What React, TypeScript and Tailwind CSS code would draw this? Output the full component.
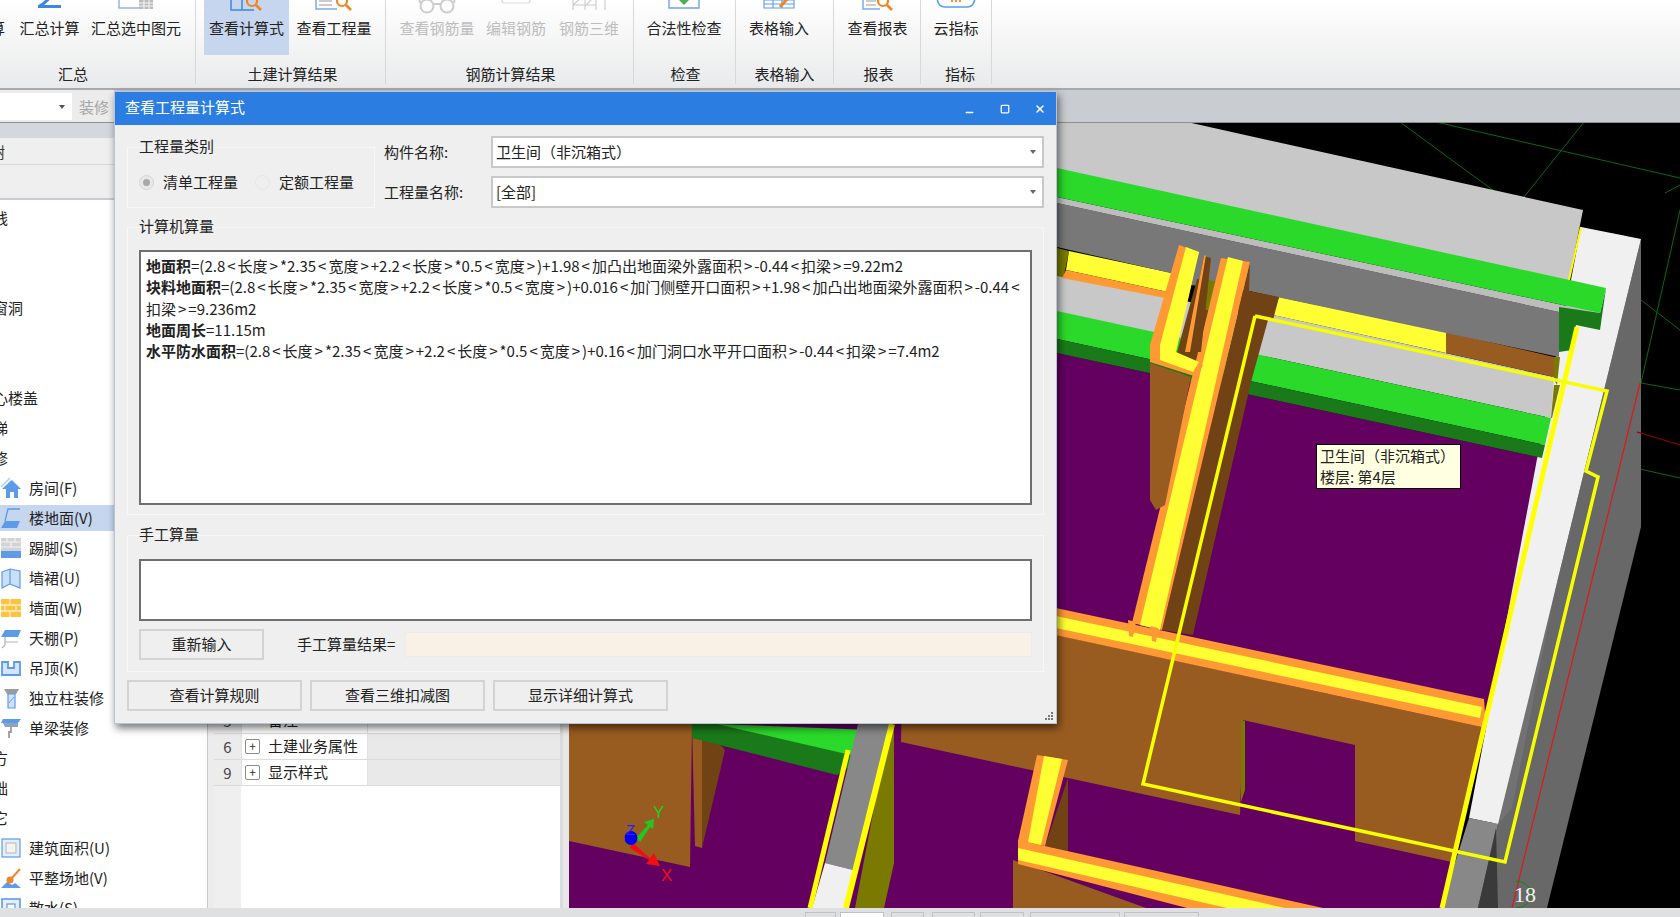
import { ReactNode } from "react";
import { Minus, Square, X } from "lucide-react";

const BLUE = "#5b9bea";

// icons are cut by the top of the window, so most of these only show the lower part
const ribbonIcons: Record<string, ReactNode> = {
  sum: (
    <svg width="24" height="8" viewBox="0 0 24 8">
      <path d="M16 -6 L5 4 L1 6.5 H23" fill="none" stroke="#3f87de" strokeWidth="3" />
    </svg>
  ),
  selected: (
    <svg width="36" height="10" viewBox="0 0 36 10">
      <path d="M1 -3 V8 H24" fill="none" stroke="#8db5ea" strokeWidth="1.5" />
      <rect x="21" y="0" width="14" height="9" fill="#bbb" />
      <path d="M21 3 H35 M21 6 H35 M26 0 V9 M31 0 V9" stroke="#f4f4f4" strokeWidth="1" />
    </svg>
  ),
  calc: (
    <svg width="34" height="12" viewBox="0 0 34 12">
      <path d="M1 -3 V10 H12 V-3 M12 10 H24" fill="none" stroke="#3f87de" strokeWidth="1.5" />
      <circle cx="22" cy="1" r="5" fill="none" stroke="#ef8626" strokeWidth="2.2" />
      <path d="M26 5 L31 10" stroke="#ef8626" strokeWidth="2.6" />
    </svg>
  ),
  quantity: (
    <svg width="38" height="12" viewBox="0 0 38 12">
      <path d="M1 -3 V9 H22" fill="none" stroke="#7caae6" strokeWidth="1.5" />
      <path d="M4 1 H17 M4 5 H17" stroke="#999" strokeWidth="1.2" />
      <circle cx="27" cy="1" r="5" fill="none" stroke="#ef8626" strokeWidth="2.2" />
      <path d="M31 5 L36 10" stroke="#ef8626" strokeWidth="2.6" />
    </svg>
  ),
  glasses: (
    <svg width="38" height="14" viewBox="0 0 38 14">
      <circle cx="9" cy="6" r="6.5" fill="none" stroke="#ccc" strokeWidth="2" />
      <circle cx="29" cy="6" r="6.5" fill="none" stroke="#ccc" strokeWidth="2" />
      <path d="M15 4 H23 M2 3 L1 -3 M36 3 L37 -3" stroke="#ccc" strokeWidth="2" fill="none" />
    </svg>
  ),
  edit: (
    <svg width="30" height="4" viewBox="0 0 30 4">
      <path d="M1 -3 V1 Q1 3 3 3 H27 Q29 3 29 1 V-3" fill="none" stroke="#ddd" strokeWidth="1.2" />
    </svg>
  ),
  rebar3d: (
    <svg width="34" height="11" viewBox="0 0 34 11">
      <path d="M1 0 V10 M13 -3 V10 M24 -3 V10 M33 0 V10 M1 5 H24 M1 5 L10 -3 M13 6 L22 -3" fill="none" stroke="#ccc" strokeWidth="1.1" />
    </svg>
  ),
  check: (
    <svg width="32" height="9" viewBox="0 0 32 9">
      <path d="M1 -3 V8 H31 V-3" fill="none" stroke="#6fa3e6" strokeWidth="1.4" />
      <path d="M10 -1 H22 L16 5 Z" fill="#4caf50" />
    </svg>
  ),
  table: (
    <svg width="32" height="9" viewBox="0 0 32 9">
      <path d="M1 0 H31 V8 H1 Z M1 4 H31 M10 0 V8 M19 0 V8" fill="none" stroke="#5b9bea" strokeWidth="1.1" />
      <path d="M17 7 L26 -3" stroke="#ef8626" strokeWidth="3" />
    </svg>
  ),
  report: (
    <svg width="32" height="11" viewBox="0 0 32 11">
      <path d="M1 -3 V9 H18" fill="none" stroke="#7caae6" strokeWidth="1.5" />
      <path d="M4 1 H14 M4 5 H14" stroke="#999" strokeWidth="1.2" />
      <circle cx="21" cy="1" r="5" fill="none" stroke="#ef8626" strokeWidth="2.2" />
      <path d="M25 5 L30 10" stroke="#ef8626" strokeWidth="2.6" />
    </svg>
  ),
  cloud: (
    <svg width="40" height="8" viewBox="0 0 40 8">
      <path d="M1 -4 Q1 7 9 7 H31 Q39 7 39 -4" fill="none" stroke="#5b9bea" strokeWidth="1.6" />
      <path d="M16 2 V-2 M20 2 V-2 M24 2 V-2" stroke="#ef8626" strokeWidth="1.8" />
    </svg>
  ),
};

function RibbonButton({
  label,
  width,
  icon,
  disabled,
  active,
}: {
  label: string;
  width: string;
  icon?: string;
  disabled?: boolean;
  active?: boolean;
}) {
  return (
    <div className={`${width} h-[58px] flex flex-col items-center shrink-0 ${active ? "bg-[#c5d6ee]" : ""}`}>
      <div className="h-[18px] flex items-start justify-center">{icon && ribbonIcons[icon]}</div>
      <div className={`h-[20px] leading-[20px] whitespace-nowrap ${disabled ? "text-[#bdbdbd]" : "text-[#222]"}`}>
        {label}
      </div>
    </div>
  );
}

function RibbonGroup({
  width,
  title,
  titleClass,
  children,
}: {
  width: string;
  title: string;
  titleClass?: string;
  children: ReactNode;
}) {
  return (
    <div className={`${width} shrink-0 h-[84px] border-r border-[#d8d8d8] flex flex-col`}>
      <div className="h-[58px] flex overflow-hidden">{children}</div>
      <div className={`mt-[9px] leading-[20px] text-center text-[#222] ${titleClass ?? ""}`}>{title}</div>
    </div>
  );
}

function Ribbon() {
  return (
    <div className="h-[90px] shrink-0 border-b-[2px] border-[#a8aaac] bg-gradient-to-b from-white to-[#e9eaeb] flex">
      <RibbonGroup width="w-[196px]" title="汇总" titleClass="pr-[49px]">
        <div className="w-[14px] h-[58px] shrink-0 overflow-hidden">
          <div className="h-[18px]" />
          <div className="-ml-[25px] leading-[20px] text-[#222] whitespace-nowrap">计算</div>
        </div>
        <RibbonButton label="汇总计算" width="w-[71px]" icon="sum" />
        <RibbonButton label="汇总选中图元" width="w-[102px]" icon="selected" />
      </RibbonGroup>
      <RibbonGroup width="w-[190px]" title="土建计算结果" titleClass="pl-[4px]">
        <div className="w-[8px] shrink-0" />
        <RibbonButton label="查看计算式" width="w-[85px]" icon="calc" active />
        <RibbonButton label="查看工程量" width="w-[90px]" icon="quantity" />
      </RibbonGroup>
      <RibbonGroup width="w-[248px]" title="钢筋计算结果" titleClass="pl-[2px]">
        <div className="w-[6px] shrink-0" />
        <RibbonButton label="查看钢筋量" width="w-[90px]" icon="glasses" disabled />
        <RibbonButton label="编辑钢筋" width="w-[68px]" icon="edit" disabled />
        <RibbonButton label="钢筋三维" width="w-[78px]" icon="rebar3d" disabled />
      </RibbonGroup>
      <RibbonGroup width="w-[102px]" title="检查" titleClass="pl-[2px]">
        <RibbonButton label="合法性检查" width="w-[100px]" icon="check" />
      </RibbonGroup>
      <RibbonGroup width="w-[98px]" title="表格输入">
        <RibbonButton label="表格输入" width="w-[86px]" icon="table" />
      </RibbonGroup>
      <RibbonGroup width="w-[87px]" title="报表" titleClass="pl-[3px]">
        <RibbonButton label="查看报表" width="w-[87px]" icon="report" />
      </RibbonGroup>
      <RibbonGroup width="w-[71px]" title="指标" titleClass="pl-[8px]">
        <RibbonButton label="云指标" width="w-[70px]" icon="cloud" />
      </RibbonGroup>
    </div>
  );
}

function Toolbar() {
  return (
    <div className="h-[33px] shrink-0 bg-[#c9cdd2] border-b border-[#8d8f92] flex">
      <div className="w-[114px] bg-[#ececec] flex pt-[3px]">
        <div className="w-[72px] h-[27px] bg-white relative">
          <span className="absolute right-[7px] top-[12px] border-x-[3px] border-t-[4px] border-x-transparent border-t-[#555]" />
        </div>
        <div className="ml-[7px] leading-[27px] text-[#a5a5a5]">装修</div>
      </div>
    </div>
  );
}

const sideIcons: Record<string, ReactNode> = {
  room: (
    <svg width="22" height="22" viewBox="0 0 22 22">
      <path d="M1 10 L10 1 M4 11 L11 4" stroke="#a9cdf5" strokeWidth="1.4" fill="none" />
      <path d="M2 12 L12 3 L21 12 H18 V21 H14 V15 H10 V21 H6 V12 Z" fill={BLUE} />
    </svg>
  ),
  floor: (
    <svg width="22" height="22" viewBox="0 0 22 22">
      <path d="M20 2 H8 L5 14" fill="none" stroke={BLUE} strokeWidth="1.3" />
      <path d="M5 14 H20 L17 21 H1 Z" fill={BLUE} />
    </svg>
  ),
  skirt: (
    <svg width="22" height="22" viewBox="0 0 22 22">
      <rect x="1" y="1" width="20" height="13" fill="#d3d3d3" />
      <path d="M1 5 H21 M1 10 H21 M7 1 V5 M15 1 V5 M11 5 V10" stroke="#f3f3f3" strokeWidth="1.2" />
      <rect x="1" y="14" width="20" height="7" fill={BLUE} />
    </svg>
  ),
  dado: (
    <svg width="22" height="22" viewBox="0 0 22 22">
      <path d="M2 5 L10 2 V17 L2 21 Z M10 2 L20 4 V21 L10 17" fill="#c9def7" stroke={BLUE} strokeWidth="1.2" />
    </svg>
  ),
  wall: (
    <svg width="22" height="22" viewBox="0 0 22 22">
      <rect x="1" y="2" width="20" height="18" fill="#ffc33d" />
      <path d="M1 8 H21 M1 14 H21 M10 2 V8 M5 8 V14 M16 8 V14 M10 14 V20" stroke="#fff1c4" strokeWidth="1.3" />
    </svg>
  ),
  ceiling: (
    <svg width="22" height="22" viewBox="0 0 22 22">
      <path d="M5 3 H21 L18 10 H1 Z" fill={BLUE} />
      <path d="M5 10 V18 L2 21 M5 15 H18" stroke="#b3b3b3" strokeWidth="1.2" fill="none" />
    </svg>
  ),
  hang: (
    <svg width="22" height="22" viewBox="0 0 22 22">
      <path d="M2 5 H8 V11 H14 V5 H20 V18 H2 Z" fill="#d5e6fa" stroke={BLUE} strokeWidth="1.8" />
    </svg>
  ),
  column: (
    <svg width="22" height="22" viewBox="0 0 22 22">
      <path d="M4 2 H19 L16 7 H7 Z" fill="#9c9c9c" />
      <path d="M8 7 H15 V21 H8 Z" fill="#cfe2f8" stroke={BLUE} strokeWidth="1.2" />
      <path d="M9 16 L14 10" stroke={BLUE} strokeWidth="1" />
    </svg>
  ),
  beam: (
    <svg width="22" height="22" viewBox="0 0 22 22">
      <path d="M3 2 H21 L18 6 H1 Z" fill={BLUE} />
      <path d="M3 6 H18 V10 H5 Z" fill="#8fa3bb" />
      <path d="M11 10 V15 H9 V21" stroke="#9c9c9c" strokeWidth="1.8" fill="none" />
    </svg>
  ),
  area: (
    <svg width="22" height="22" viewBox="0 0 22 22">
      <rect x="2" y="2" width="18" height="18" fill="#e6eefa" stroke={BLUE} strokeWidth="1.2" />
      <rect x="6" y="6" width="10" height="10" fill="#f3f3f3" stroke="#b5b5b5" strokeWidth="1" />
    </svg>
  ),
  level: (
    <svg width="22" height="22" viewBox="0 0 22 22">
      <path d="M1 21 L7 15 L12 18 L15 16 L21 21 Z" fill={BLUE} />
      <path d="M11 12 L20 2" stroke="#ef8626" strokeWidth="2" />
      <circle cx="10" cy="13" r="3.5" fill="#ef8626" />
    </svg>
  ),
  apron: (
    <svg width="22" height="22" viewBox="0 0 22 22">
      <rect x="2" y="2" width="18" height="18" fill="#e6eefa" stroke={BLUE} strokeWidth="1.6" />
      <rect x="7" y="7" width="8" height="8" fill="#fff" stroke={BLUE} strokeWidth="1.2" />
    </svg>
  ),
};

const treeRows: { label?: string; icon?: string; active?: boolean }[] = [
  { label: "轴线" },
  {},
  {},
  { label: "门窗洞" },
  {},
  {},
  { label: "空心楼盖" },
  { label: "楼梯" },
  { label: "装修" },
  { label: "房间(F)", icon: "room" },
  { label: "楼地面(V)", icon: "floor", active: true },
  { label: "踢脚(S)", icon: "skirt" },
  { label: "墙裙(U)", icon: "dado" },
  { label: "墙面(W)", icon: "wall" },
  { label: "天棚(P)", icon: "ceiling" },
  { label: "吊顶(K)", icon: "hang" },
  { label: "独立柱装修", icon: "column" },
  { label: "单梁装修", icon: "beam" },
  { label: "土方" },
  { label: "基础" },
  { label: "其它" },
  { label: "建筑面积(U)", icon: "area" },
  { label: "平整场地(V)", icon: "level" },
  { label: "散水(S)", icon: "apron" },
];

function Sidebar() {
  return (
    <div className="w-[208px] shrink-0 border-r border-[#c6c9cd] bg-white overflow-hidden">
      <div className="h-[15px] bg-[#d4d7dc]" />
      <div className="h-[27px] bg-[#efefef] border-b border-[#d8d8d8] overflow-hidden leading-[27px] whitespace-nowrap">
        <span className="-ml-[10px] text-[#333]">树</span>
      </div>
      <div className="h-[35px] bg-[#efefef] border-b-[2px] border-[#c9ccd3]" />
      <div className="pt-[1px]">
        {treeRows.map((row, i) => (
          <div
            key={i}
            className={`h-[26px] mt-[4px] flex items-center overflow-hidden whitespace-nowrap text-[#222] ${row.active ? "bg-[#c5d6ee]" : ""}`}
          >
            {row.icon ? (
              <>
                <span className="w-[29px] shrink-0">{sideIcons[row.icon]}</span>
                <span>{row.label}</span>
              </>
            ) : (
              row.label && <span className="-ml-[22px]">{row.label}</span>
            )}
          </div>
        ))}
      </div>
    </div>
  );
}

function PropRow({ no, name, plus, shaded }: { no: number; name: string; plus?: boolean; shaded?: boolean }) {
  return (
    <div className="h-[26px] flex border-b border-[#dcdcdc]">
      <div className="w-[27px] shrink-0 bg-[#ececec] text-center leading-[26px] text-[#444]">{no}</div>
      <div className="w-[127px] shrink-0 bg-white flex items-center border-x border-[#e2e2e2]">
        {plus ? (
          <span className="ml-[3px] w-[15px] h-[15px] border border-[#8c8c8c] rounded-[2px] text-[12px] leading-[12px] text-center text-[#333]">
            +
          </span>
        ) : (
          <span className="ml-[3px] w-[15px]" />
        )}
        <span className="ml-[8px] whitespace-nowrap text-[#222]">{name}</span>
      </div>
      <div className={`flex-1 ${shaded ? "bg-[#e9e9e9]" : "bg-white"}`} />
    </div>
  );
}

function PropertyPanel() {
  return (
    <div className="w-[355px] shrink-0 bg-[#ececec] pl-[6px]">
      <div className="h-full w-[349px] bg-white border-r-[3px] border-[#d9dbde] flex flex-col">
        <div className="h-[585px] shrink-0 flex">
          <div className="w-[27px] bg-[#ececec]" />
        </div>
        <PropRow no={5} name="备注" />
        <PropRow no={6} name="土建业务属性" plus shaded />
        <PropRow no={9} name="显示样式" plus shaded />
        <div className="flex-1 flex">
          <div className="w-[27px] bg-[#efefef]" />
        </div>
      </div>
    </div>
  );
}

const C = {
  purple: "#640060",
  brown: "#995c20",
  darkBrown: "#704214",
  orange: "#ff9933",
  yellow: "#ffff33",
  green: "#2bd92b",
  darkGreen: "#1a7a1a",
  light: "#c8c8c8",
  mid: "#787878",
  white: "#f0f0f0",
  side: "#686868",
  olive: "#7a7a00",
};

// scene polygons in page coordinates, back to front
const polys: [string, string][] = [
  [C.purple, "569,300 1057,353 1542,458 1442,908 569,908"],
  [C.light, "1057,122 1187,122 1583,210 1567,290 1057,175"],
  [C.side, "1641,239 1641,527 1547,908 1478,908 1498,824"],
  ["#727272", "1610,233 1625,236 1512,808 1498,824 1486,860"],
  [C.white, "1581,227 1641,239 1498,824 1469,818"],
  ["#888888", "1469,818 1498,824 1478,908 1441,908"],
  ["#3a3a3a", "1496,828 1498,908 1478,908"],
  [C.olive, "1057,248 1069,251 1057,310"],
  [C.light, "1057,276 1165,297 1279,320 1265,360 1057,312"],
  [C.light, "1273,315 1554,377 1551,418 1259,355"],
  [C.yellow, "1279,297 1446,332 1446,353 1273,315"],
  [C.brown, "1446,332 1554,357 1554,377 1446,353"],
  [C.olive, "1554,357 1560,357 1557,385 1554,380"],
  [C.olive, "1554,385 1560,385 1552,418 1551,418"],
  [C.green, "1057,311 1551,418 1545,445 1057,339"],
  [C.darkGreen, "1057,339 1545,445 1542,458 1057,353"],
  [C.yellow, "1069,251 1172,273 1168,292 1066,270"],
  [C.orange, "1066,270 1168,292 1165,298 1062,278"],
  [C.mid, "1057,203 1559,312 1559,357 1249,291 1057,247"],
  ["#bdbdbd", "1057,197 1600,313 1559,312 1057,203"],
  [C.darkGreen, "1559,307 1600,313 1606,288 1600,330 1576,325 1572,350 1559,352"],
  [C.green, "1057,168 1606,288 1600,313 1057,197"],
  // walls running back from the horizontal one
  [C.mid, "1190,250 1250,262 1249,291 1190,285"],
  [C.darkBrown, "1197,279 1226,283 1203,365 1175,360"],
  [C.olive, "1208,280 1224,283 1218,310 1203,310"],
  [C.darkBrown, "1250,262 1249,291 1279,297 1273,320 1268,320 1251,382 1193,635 1162,630"],
  [C.orange, "1221,258 1250,262 1162,630 1132,623"],
  [C.yellow, "1228,257 1243,261 1160,630 1140,625"],
  [C.brown, "1150,363 1191,377 1165,505 1156,510 1150,500"],
  [C.darkBrown, "1204,256 1211,258 1201,352 1185,352"],
  [C.orange, "1204,256 1206,255 1190,352 1185,352"],
  [C.orange, "1179,245 1199,252 1175,353 1203,365 1197,377 1150,362 1150,345"],
  [C.yellow, "1186,247 1199,252 1176,352 1199,362 1193,372 1160,360 1160,345"],
  // near wall with door opening
  [C.brown, "904,600 1057,635 1486,728 1452,862 1355,841 1355,745 1243,720 1240,815 1068,778 901,742"],
  [C.olive, "1241,720 1245,721 1245,790 1241,802"],
  [C.brown, "569,724 692,724 690,867 569,841"],
  [C.brown, "692,724 702,724 702,848 695,846"],
  [C.darkBrown, "702,724 725,750 702,848"],
  [C.orange, "1000,596 1484,699 1486,728 1000,623"],
  [C.yellow, "1000,604 1482,707 1480,718 1000,616"],
  [C.orange, "1128,620 1136,622 1133,637 1129,636"],
  [C.orange, "1151,626 1158,628 1156,642 1152,641"],
  // lower left stub
  [C.darkGreen, "692,724 716,724 863,757 837,775 692,738"],
  [C.green, "716,724 871,730 863,757 842,753"],
  [C.olive, "894,727 894,863 884,908 855,908 890,724"],
  ["#888888", "858,724 891,724 853,870 825,863"],
  [C.white, "825,863 853,870 845,908 812,908"],
  // bottom wall
  [C.brown, "1013,860 1146,908 1013,908"],
  [C.darkBrown, "1068,778 1068,851 1045,846"],
  [C.orange, "1018,840 1323,908 1187,908 1018,864"],
  [C.yellow, "1018,848 1285,908 1227,908 1018,860"],
  [C.orange, "1037,755 1068,760 1045,846 1018,841"],
  [C.yellow, "1044,756 1062,759 1041,845 1028,842"],
];

const gridLines: [number, number, number, number][] = [
  [1400, 122, 1494, 191],
  [1436, 122, 1680, 178],
  [1584, 122, 1524, 197],
  [1665, 193, 1680, 185],
  [1680, 210, 1641, 383],
  [1641, 300, 1680, 330],
  [1641, 383, 1680, 390],
  [1622, 465, 1680, 478],
];

function Scene() {
  return (
    <div className="flex-1 relative bg-black overflow-hidden">
      <svg className="absolute inset-0" width="1111" height="785" viewBox="569 123 1111 785">
        {gridLines.map(([x1, y1, x2, y2], i) => (
          <line key={i} x1={x1} y1={y1} x2={x2} y2={y2} stroke="#0a6a0a" strokeWidth="1" />
        ))}
        {polys.map(([fill, points], i) => (
          <polygon key={i} fill={fill} points={points} />
        ))}
        <line x1="1581" y1="227" x2="1569" y2="280" stroke="#ffff00" strokeWidth="2" />
        <line x1="1577" y1="327" x2="1442" y2="908" stroke="#ffff00" strokeWidth="5" />
        <line x1="848" y1="750" x2="810" y2="908" stroke="#ffff00" strokeWidth="5" />
        <line x1="892" y1="724" x2="846" y2="908" stroke="#ffff00" strokeWidth="6" />
        <line x1="1640" y1="383" x2="1512" y2="908" stroke="#e01818" strokeWidth="1.2" />
        <line x1="1637" y1="432" x2="1680" y2="445" stroke="#8a0000" strokeWidth="1.2" />
        <polyline
          points="1255,316 1607,391 1586,471 1598,477 1505,862 1143,784 1255,316"
          fill="none"
          stroke="#f6ff00"
          strokeWidth="3.5"
        />
        <path d="M1516 881 A16 16 0 0 1 1532 894 A16 16 0 0 1 1516 908" fill="none" stroke="#0a8a0a" strokeWidth="1" />
        <text x="1514" y="902" fill="#f2f2f2" fontSize="22" fontFamily="Liberation Serif, serif">
          18
        </text>
        {/* axis triad */}
        <path d="M631 845 L624 838 L638 838 Z" fill="#dddddd" />
        <path d="M636 838 L648 825 L644 822 L654 819 L653 829 L650 827 L640 842 Z" fill="#22c722" />
        <path d="M632 842 L650 858 L654 853 L660 866 L646 864 L649 860 L630 848 Z" fill="#ee1111" />
        <ellipse cx="631" cy="838" rx="6.5" ry="7" fill="#0000ee" />
        <text x="626" y="835" fill="#2222ee" fontSize="15" fontFamily="Liberation Sans, sans-serif">
          Z
        </text>
        <text x="653" y="818" fill="#22cc22" fontSize="17" fontFamily="Liberation Sans, sans-serif">
          Y
        </text>
        <text x="661" y="881" fill="#ee1111" fontSize="17" fontFamily="Liberation Sans, sans-serif">
          X
        </text>
      </svg>
      <div className="absolute left-[747px] top-[321px] w-[145px] h-[45px] bg-[#ffffe1] border border-black px-[3px] text-[15px] leading-[21px] text-[#222] whitespace-nowrap">
        <div>卫生间（非沉箱式）</div>
        <div>楼层: 第4层</div>
      </div>
    </div>
  );
}

function Group({ title, className, children }: { title: string; className: string; children: ReactNode }) {
  return (
    <div className={`border border-[#f7f7f7] px-[11px] ${className}`}>
      <div className="-mt-[13px] h-[21px] leading-[21px] text-[#222]">{title}</div>
      {children}
    </div>
  );
}

function SelectBox({ value }: { value: string }) {
  return (
    <div className="w-[553px] h-[32px] bg-white border-[2px] border-[#c8c8c8] flex items-center justify-between pl-[3px] pr-[6px] text-[#222]">
      <span>{value}</span>
      <span className="border-x-[3px] border-t-[4px] border-x-transparent border-t-[#666]" />
    </div>
  );
}

function Btn({ label, className }: { label: string; className: string }) {
  return (
    <div className={`h-[31px] shrink-0 bg-[#efefef] border-[2px] border-[#d3d3d3] text-center leading-[25px] text-[#222] ${className}`}>
      {label}
    </div>
  );
}

// the original font sets the angle brackets much wider than ours
function Formula({ text }: { text: string }) {
  return (
    <>
      {text.split(/([<>])/).map((part, i) =>
        part === "<" || part === ">" ? (
          <span key={i} className="mx-[2px]">
            {part}
          </span>
        ) : (
          part
        )
      )}
    </>
  );
}

const BASE = "(2.8<长度>*2.35<宽度>+2.2<长度>*0.5<宽度>)";

function Dialog() {
  return (
    <div className="absolute left-[114px] top-[91px] w-[943px] h-[633px] bg-[#efefef] border border-[#b9c3d3] shadow-[2px_4px_8px_rgba(0,0,0,0.55)] flex flex-col">
      <div className="h-[33px] shrink-0 bg-[#2b7de1] flex items-center pl-[10px] pb-[2px] text-white relative">
        <span>查看工程量计算式</span>
        <Minus size={11} strokeWidth={3} className="absolute left-[849px] top-[15px]" />
        <Square size={10} strokeWidth={3} className="absolute left-[885px] top-[12px]" />
        <X size={12} strokeWidth={3} className="absolute left-[919px] top-[11px]" />
      </div>

      <div className="flex pl-[12px] pt-[11px] shrink-0">
        <div className="w-[248px] h-[61px] mt-[11px] shrink-0">
          <Group title="工程量类别" className="h-[61px]">
            <div className="flex items-center mt-[15px]">
              <span className="w-[15px] h-[15px] rounded-full border border-[#d5d5d5] bg-[#e8e8e8] flex items-center justify-center">
                <span className="w-[7px] h-[7px] rounded-full bg-[#a8a8a8]" />
              </span>
              <span className="ml-[9px] text-[#222]">清单工程量</span>
              <span className="ml-[17px] w-[15px] h-[15px] rounded-full border border-[#e6e6e6]" />
              <span className="ml-[9px] text-[#222]">定额工程量</span>
            </div>
          </Group>
        </div>
        <div className="ml-[9px] flex flex-col gap-[8px]">
          <div className="flex items-center">
            <span className="w-[107px] text-[#222]">构件名称:</span>
            <SelectBox value="卫生间（非沉箱式）" />
          </div>
          <div className="flex items-center">
            <span className="w-[107px] text-[#222]">工程量名称:</span>
            <SelectBox value="[全部]" />
          </div>
        </div>
      </div>

      <Group title="计算机算量" className="mt-[19px] ml-[12px] w-[917px] h-[288px] shrink-0">
        <div className="mt-[14px] h-[255px] bg-white border-[2px] border-[#6f6f6f] px-[5px] pt-[3px] text-[15px] leading-[21.3px] text-[#222] whitespace-nowrap">
          <div>
            <b>地面积</b>=<Formula text={`${BASE}+1.98<加凸出地面梁外露面积>-0.44<扣梁>=9.22m2`} />
          </div>
          <div>
            <b>块料地面积</b>=<Formula text={`${BASE}+0.016<加门侧壁开口面积>+1.98<加凸出地面梁外露面积>-0.44<`} />
          </div>
          <div>
            <Formula text="扣梁>=9.236m2" />
          </div>
          <div>
            <b>地面周长</b>=11.15m
          </div>
          <div>
            <b>水平防水面积</b>=<Formula text={`${BASE}+0.16<加门洞口水平开口面积>-0.44<扣梁>=7.4m2`} />
          </div>
        </div>
      </Group>

      <Group title="手工算量" className="mt-[20px] ml-[12px] w-[917px] h-[137px] shrink-0">
        <div className="mt-[15px] h-[62px] bg-white border-[2px] border-[#6f6f6f]" />
        <div className="mt-[8px] flex items-center">
          <Btn label="重新输入" className="w-[125px]" />
          <span className="ml-[33px] w-[108px] text-[#222] whitespace-nowrap">手工算量结果=</span>
          <div className="h-[25px] flex-1 bg-[#f9f0e6] border border-[#ebebeb]" />
        </div>
      </Group>

      <div className="mt-[8px] ml-[12px] flex gap-[8px]">
        <Btn label="查看计算规则" className="w-[175px]" />
        <Btn label="查看三维扣减图" className="w-[175px]" />
        <Btn label="显示详细计算式" className="w-[175px]" />
      </div>

      <svg className="absolute right-[2px] bottom-[2px]" width="10" height="10" viewBox="0 0 10 10" fill="#777">
        <rect x="7" y="1" width="2" height="2" />
        <rect x="4" y="4" width="2" height="2" />
        <rect x="7" y="4" width="2" height="2" />
        <rect x="1" y="7" width="2" height="2" />
        <rect x="4" y="7" width="2" height="2" />
        <rect x="7" y="7" width="2" height="2" />
      </svg>
    </div>
  );
}

function StatusBar() {
  const tabs = [
    "w-[31px]",
    "w-[44px] ml-[4px] bg-white border-[#7aa7e0]",
    "w-[33px] ml-[7px]",
    "w-[43px] ml-[8px]",
    "w-[44px] ml-[5px]",
    "w-[90px] ml-[6px]",
    "w-[75px] ml-[4px]",
  ];
  return (
    <div className="h-[9px] shrink-0 bg-[#dfe0e2] pl-[805px] pt-[4px] flex overflow-hidden">
      {tabs.map((t, i) => (
        <div key={i} className={`h-[12px] shrink-0 border border-[#c2c2c2] ${t}`} />
      ))}
    </div>
  );
}

export default function App() {
  return (
    <div className="relative w-[1680px] h-[917px] overflow-hidden flex flex-col bg-[#ececec] text-[15px] font-['Noto_Sans_CJK_SC','Liberation_Sans',sans-serif]">
      <Ribbon />
      <Toolbar />
      <div className="flex-1 flex min-h-0">
        <Sidebar />
        <PropertyPanel />
        <div className="w-[6px] shrink-0 bg-[#e8e8e8]" />
        <Scene />
      </div>
      <StatusBar />
      <Dialog />
    </div>
  );
}
